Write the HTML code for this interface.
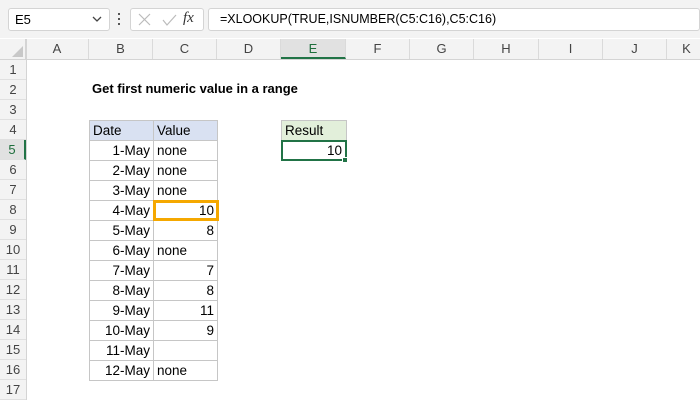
<!DOCTYPE html>
<html><head><style>
*{margin:0;padding:0;box-sizing:border-box}
body{width:700px;height:400px;overflow:hidden;background:#fff;font-family:"Liberation Sans",Arial,sans-serif;font-size:13px;color:#000;position:relative}
.a{position:absolute}
.ch{position:absolute;top:39px;height:20px;line-height:20px;text-align:center;color:#444;font-size:13px;border-right:1px solid #dadada;background:#f3f3f3}
.rh{position:absolute;left:0;width:26px;height:20px;line-height:20px;text-align:center;color:#444;font-size:13px;background:#f3f3f3;border-bottom:1px solid #e0e0e0}
.c{position:absolute;height:21px;line-height:20px;padding:0 3px;border:1px solid #c6c6c6;font-size:13.5px}
.r{text-align:right}
</style></head><body>
<div class="a" style="left:0;top:0;width:700px;height:38px;background:#f3f3f3"></div>
<div class="a" style="left:8px;top:8px;width:102px;height:23px;background:#fff;border:1px solid #d4d4d4;border-radius:3px;line-height:21px;padding-left:6px;font-size:13px">E5</div>
<svg class="a" style="left:92px;top:15px" width="10" height="8"><path d="M1 2 L5 6 L9 2" stroke="#444" fill="none" stroke-width="1.3"/></svg>
<div class="a" style="left:118px;top:13px;width:2px;height:2px;background:#555;box-shadow:0 5px #555,0 10px #555"></div>
<div class="a" style="left:130px;top:8px;width:74px;height:23px;background:#fff;border:1px solid #d4d4d4;border-radius:3px"></div>
<svg class="a" style="left:138px;top:13px" width="40" height="14"><path d="M1 1 L12 12 M12 1 L1 12" stroke="#bbb" stroke-width="1.2"/><path d="M25 7 L29 12 L38 2" stroke="#bbb" fill="none" stroke-width="1.2"/></svg>
<div class="a" style="left:183px;top:10px;font-family:'Liberation Serif',serif;font-style:italic;font-size:15px;color:#333">fx</div>
<div class="a" style="left:208px;top:8px;width:492px;height:23px;background:#fff;border:1px solid #d4d4d4;border-radius:3px;line-height:21px;padding-left:11px;font-size:12.5px">=XLOOKUP(TRUE,ISNUMBER(C5:C16),C5:C16)</div>
<div class="a" style="left:0;top:39px;width:26px;height:20px;background:#f3f3f3;border-right:1px solid #d4d4d4"></div>
<svg class="a" style="left:12px;top:46px" width="12" height="12"><path d="M11 0 L11 11 L0 11Z" fill="#c8c8c8"/></svg>
<div class="ch" style="left:26px;width:63px">A</div>
<div class="ch" style="left:89px;width:64px">B</div>
<div class="ch" style="left:153px;width:64px">C</div>
<div class="ch" style="left:217px;width:64px">D</div>
<div class="ch" style="left:281px;width:65px;background:#e1e1e1;color:#1e6e3c;border-bottom:2px solid #217346">E</div>
<div class="ch" style="left:346px;width:64px">F</div>
<div class="ch" style="left:410px;width:64px">G</div>
<div class="ch" style="left:474px;width:65px">H</div>
<div class="ch" style="left:539px;width:64px">I</div>
<div class="ch" style="left:603px;width:64px">J</div>
<div class="ch" style="left:667px;width:40px">K</div>
<div class="a" style="left:0;top:59px;width:700px;height:1px;background:#d4d4d4"></div>
<div class="a" style="left:26px;top:39px;width:1px;height:361px;background:#d4d4d4"></div>
<div class="rh" style="top:60px">1</div><div class="rh" style="top:80px">2</div><div class="rh" style="top:100px">3</div><div class="rh" style="top:120px">4</div>
<div class="rh" style="top:140px;background:#e1e1e1;color:#1e6e3c;border-right:2px solid #217346">5</div>
<div class="rh" style="top:160px">6</div><div class="rh" style="top:180px">7</div><div class="rh" style="top:200px">8</div><div class="rh" style="top:220px">9</div><div class="rh" style="top:240px">10</div><div class="rh" style="top:260px">11</div><div class="rh" style="top:280px">12</div><div class="rh" style="top:300px">13</div><div class="rh" style="top:320px">14</div><div class="rh" style="top:340px">15</div><div class="rh" style="top:360px">16</div><div class="rh" style="top:380px">17</div>
<div class="a" style="left:92px;top:81px;font-weight:bold;font-size:13px">Get first numeric value in a range</div>
<div class="c" style="left:89px;top:120px;width:65px;background:#d9e1f2">Date</div>
<div class="c" style="left:153px;top:120px;width:65px;background:#d9e1f2">Value</div>
<div class="c r" style="left:89px;top:140px;width:65px">1-May</div><div class="c" style="left:153px;top:140px;width:65px">none</div>
<div class="c r" style="left:89px;top:160px;width:65px">2-May</div><div class="c" style="left:153px;top:160px;width:65px">none</div>
<div class="c r" style="left:89px;top:180px;width:65px">3-May</div><div class="c" style="left:153px;top:180px;width:65px">none</div>
<div class="c r" style="left:89px;top:200px;width:65px">4-May</div><div class="c r" style="left:153px;top:200px;width:65px">10</div>
<div class="c r" style="left:89px;top:220px;width:65px">5-May</div><div class="c r" style="left:153px;top:220px;width:65px">8</div>
<div class="c r" style="left:89px;top:240px;width:65px">6-May</div><div class="c" style="left:153px;top:240px;width:65px">none</div>
<div class="c r" style="left:89px;top:260px;width:65px">7-May</div><div class="c r" style="left:153px;top:260px;width:65px">7</div>
<div class="c r" style="left:89px;top:280px;width:65px">8-May</div><div class="c r" style="left:153px;top:280px;width:65px">8</div>
<div class="c r" style="left:89px;top:300px;width:65px">9-May</div><div class="c r" style="left:153px;top:300px;width:65px">11</div>
<div class="c r" style="left:89px;top:320px;width:65px">10-May</div><div class="c r" style="left:153px;top:320px;width:65px">9</div>
<div class="c r" style="left:89px;top:340px;width:65px">11-May</div><div class="c" style="left:153px;top:340px;width:65px"></div>
<div class="c r" style="left:89px;top:360px;width:65px">12-May</div><div class="c" style="left:153px;top:360px;width:65px">none</div>
<div class="a" style="left:153px;top:200px;width:66px;height:21px;border:3px solid #f5a800"></div>
<div class="c" style="left:281px;top:120px;width:66px;background:#e2efda">Result</div>
<div class="c r" style="left:281px;top:140px;width:66px;border:2px solid #217346;line-height:17px">10</div>
<div class="a" style="left:342px;top:157px;width:6px;height:6px;background:#217346;border:1px solid #fff"></div>
</body></html>
